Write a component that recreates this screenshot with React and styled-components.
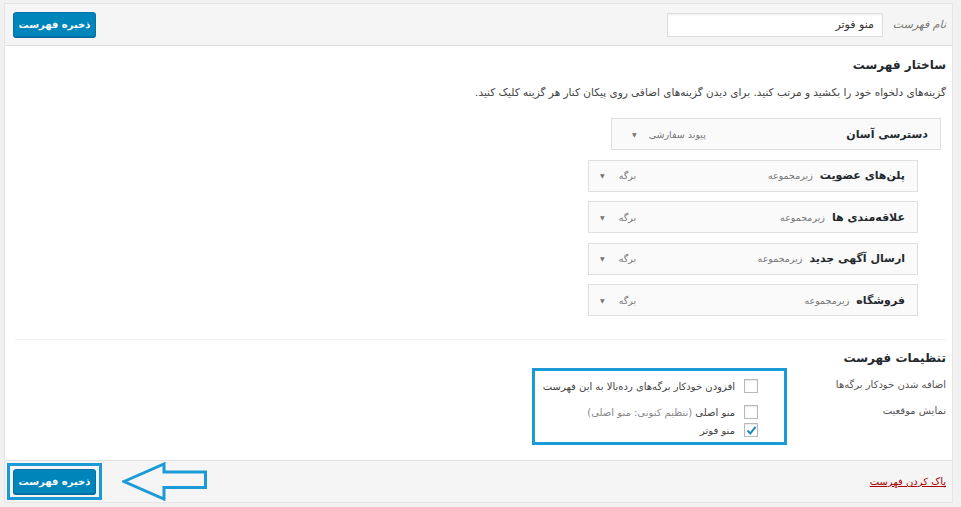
import React from "react";
import styled, { createGlobalStyle } from "styled-components";

const GlobalStyle = createGlobalStyle`
  body {
    margin: 0;
    background: #f1f1f1;
    font-family: "DejaVu Sans", "Noto Sans", sans-serif;
    font-size: 11px;
    color: #444;
  }
`;

const menuItems = [
  { title: "دسترسی آسان", type: "پیوند سفارشی", sub: false },
  { title: "پلن‌های عضویت", type: "برگه", sub: true },
  { title: "علاقه‌مندی ها", type: "برگه", sub: true },
  { title: "ارسال آگهی جدید", type: "برگه", sub: true },
  { title: "فروشگاه", type: "برگه", sub: true },
];

const App = () => {
  return (
    <>
      <GlobalStyle />
      <Panel>
        <Header>
          <NameLabel>نام فهرست</NameLabel>
          <NameInput defaultValue="منو فوتر" />
          <HeaderEnd>
            <SaveButton>ذخیره فهرست</SaveButton>
          </HeaderEnd>
        </Header>

        <Body>
          <Heading top={10}>ساختار فهرست</Heading>
          <Description>
            گزینه‌های دلخواه خود را بکشید و مرتب کنید. برای دیدن گزینه‌های اضافی
            روی پیکان کنار هر گزینه کلیک کنید.
          </Description>

          <MenuList>
            {menuItems.map((item) => (
              <MenuItem key={item.title} sub={item.sub}>
                <ItemTitle>
                  <strong>{item.title}</strong>
                  {item.sub && <SubLabel>زیرمجموعه</SubLabel>}
                </ItemTitle>
                <ItemControls sub={item.sub}>
                  <ItemType>{item.type}</ItemType>
                  <Caret>▼</Caret>
                </ItemControls>
              </MenuItem>
            ))}
          </MenuList>

          <Settings>
            <Heading top={0}>تنظیمات فهرست</Heading>
            <SettingsGrid>
              <SettingLabels>
                <SettingLabel>اضافه شدن خودکار برگه‌ها</SettingLabel>
                <SettingLabel>نمایش موقعیت</SettingLabel>
              </SettingLabels>
              <OptionBox>
                <OptionRow gap={12}>
                  <Checkbox />
                  <span>افزودن خودکار برگه‌های رده‌بالا به این فهرست</span>
                </OptionRow>
                <OptionRow gap={4}>
                  <Checkbox />
                  <span>
                    منو اصلی <Muted>(تنظیم کنونی: منو اصلی)</Muted>
                  </span>
                </OptionRow>
                <OptionRow gap={0}>
                  <Checkbox checked>
                    <svg width="11" height="11" viewBox="0 0 11 11">
                      <path
                        d="M1.5 5.5 L4.3 8.4 L9.6 1.8"
                        fill="none"
                        stroke="#1e8cbe"
                        strokeWidth="2"
                      />
                    </svg>
                  </Checkbox>
                  <span>منو فوتر</span>
                </OptionRow>
              </OptionBox>
            </SettingsGrid>
          </Settings>
        </Body>

        <Footer>
          <DeleteLink href="#">پاک کردن فهرست</DeleteLink>
          <FooterEnd>
            <svg width="86" height="39" viewBox="0 0 86 39">
              <path
                d="M2 19.5 L42 2 L42 10 L83.5 10 L83.5 25.5 L42 25.5 L42 37 Z"
                fill="none"
                stroke="#1a9bd7"
                strokeWidth="3"
                strokeLinejoin="miter"
              />
            </svg>
            <HighlightBox>
              <SaveButton>ذخیره فهرست</SaveButton>
            </HighlightBox>
          </FooterEnd>
        </Footer>
      </Panel>
    </>
  );
};

export default App;

const Panel = styled.div`
  direction: rtl;
  box-sizing: border-box;
  width: 949px;
  margin: 3px 0 0 4px;
  background: #fff;
  border: 1px solid #e5e5e5;
`;

const Header = styled.div`
  display: flex;
  align-items: center;
  height: 41px;
  padding: 0 6px 0 8px;
  background: #f5f5f5;
  border-bottom: 1px solid #dfdfdf;
`;

const NameLabel = styled.label`
  color: #777;
  font-size: 11px;
  font-style: italic;
  margin-left: 10px;
`;

const NameInput = styled.input`
  direction: rtl;
  box-sizing: border-box;
  width: 216px;
  height: 24px;
  padding: 0 8px;
  border: 1px solid #ddd;
  background: #fff;
  font-family: inherit;
  font-size: 11px;
  color: #333;
  box-shadow: inset 0 1px 2px rgba(0, 0, 0, 0.07);
`;

const HeaderEnd = styled.div`
  margin-right: auto;
  display: flex;
`;

const SaveButton = styled.button`
  box-sizing: border-box;
  width: 83px;
  height: 25px;
  padding: 0;
  border: 1px solid #0073aa;
  border-radius: 3px;
  background: #0085ba;
  color: #fff;
  font-family: inherit;
  font-size: 10px;
  font-weight: bold;
  box-shadow: 0 1px 0 #006799;
  cursor: pointer;
`;

const Body = styled.div`
  height: 414px;
  padding: 0 6px 0 10px;
  overflow: hidden;
`;

const Heading = styled.h3`
  margin: ${({ top }) => top}px 0 0;
  font-size: 12px;
  font-weight: bold;
  color: #23282d;
  line-height: 18px;
`;

const Description = styled.p`
  margin: 0;
  padding-top: 10px;
  font-size: 10.5px;
  color: #444;
  line-height: 16px;
  white-space: nowrap;
`;

const MenuList = styled.div`
  display: flex;
  flex-direction: column;
  gap: 9.5px;
  margin-top: 18px;
  padding-right: 5px;
`;

const MenuItem = styled.div`
  box-sizing: border-box;
  display: flex;
  align-items: center;
  justify-content: space-between;
  width: 330px;
  height: 32px;
  margin-right: ${({ sub }) => (sub ? "23px" : "0")};
  padding-right: 12px;
  background: #fafafa;
  border: 1px solid #dfdfdf;
`;

const ItemTitle = styled.div`
  display: flex;
  align-items: baseline;
  gap: 7px;
  color: #23282d;

  strong {
    font-size: 11px;
  }
`;

const SubLabel = styled.span`
  font-size: 9.5px;
  color: #777;
`;

const ItemControls = styled.div`
  display: flex;
  align-items: center;
  gap: ${({ sub }) => (sub ? "14px" : "12px")};
  padding-left: ${({ sub }) => (sub ? "11px" : "20px")};
`;

const ItemType = styled.span`
  font-size: 9.5px;
  color: #777;
`;

const Caret = styled.span`
  font-size: 6px;
  color: #777;
`;

const Settings = styled.div`
  margin-top: 23px;
  border-top: 1px solid #f0f0f0;
  padding-top: 9px;
`;

const SettingsGrid = styled.div`
  display: flex;
  align-items: flex-start;
  margin-top: 1px;
`;

const SettingLabels = styled.div`
  width: 159px;
  padding-top: 4px;
`;

const SettingLabel = styled.div`
  height: 26px;
  line-height: 26px;
  font-size: 10px;
  color: #555;
`;

const OptionBox = styled.div`
  box-sizing: border-box;
  width: 255px;
  padding: 8px 26px 5px 6px;
  border: 3px solid #1a9bd7;
`;

const OptionRow = styled.label`
  display: flex;
  align-items: center;
  gap: 9px;
  height: 14px;
  margin-bottom: ${({ gap }) => gap}px;
  font-size: 10px;
  color: #444;
  white-space: nowrap;
`;

const Muted = styled.span`
  color: #888;
`;

const Checkbox = styled.span`
  box-sizing: border-box;
  flex: none;
  display: flex;
  align-items: center;
  justify-content: center;
  width: 14px;
  height: 14px;
  background: #fff;
  border: 1px solid #b4b9be;
  box-shadow: inset 0 1px 2px rgba(0, 0, 0, 0.1);
`;

const Footer = styled.div`
  display: flex;
  align-items: center;
  justify-content: space-between;
  height: 41px;
  padding: 0 6px 0 2px;
  background: #f5f5f5;
  border-top: 1px solid #dfdfdf;
`;

const DeleteLink = styled.a`
  color: #a00;
  font-size: 10px;
  text-decoration: underline;
`;

const FooterEnd = styled.div`
  display: flex;
  align-items: center;
  gap: 20px;
`;

const HighlightBox = styled.div`
  box-sizing: border-box;
  display: flex;
  align-items: center;
  justify-content: center;
  width: 95px;
  height: 37px;
  border: 3px solid #1a9bd7;
`;
